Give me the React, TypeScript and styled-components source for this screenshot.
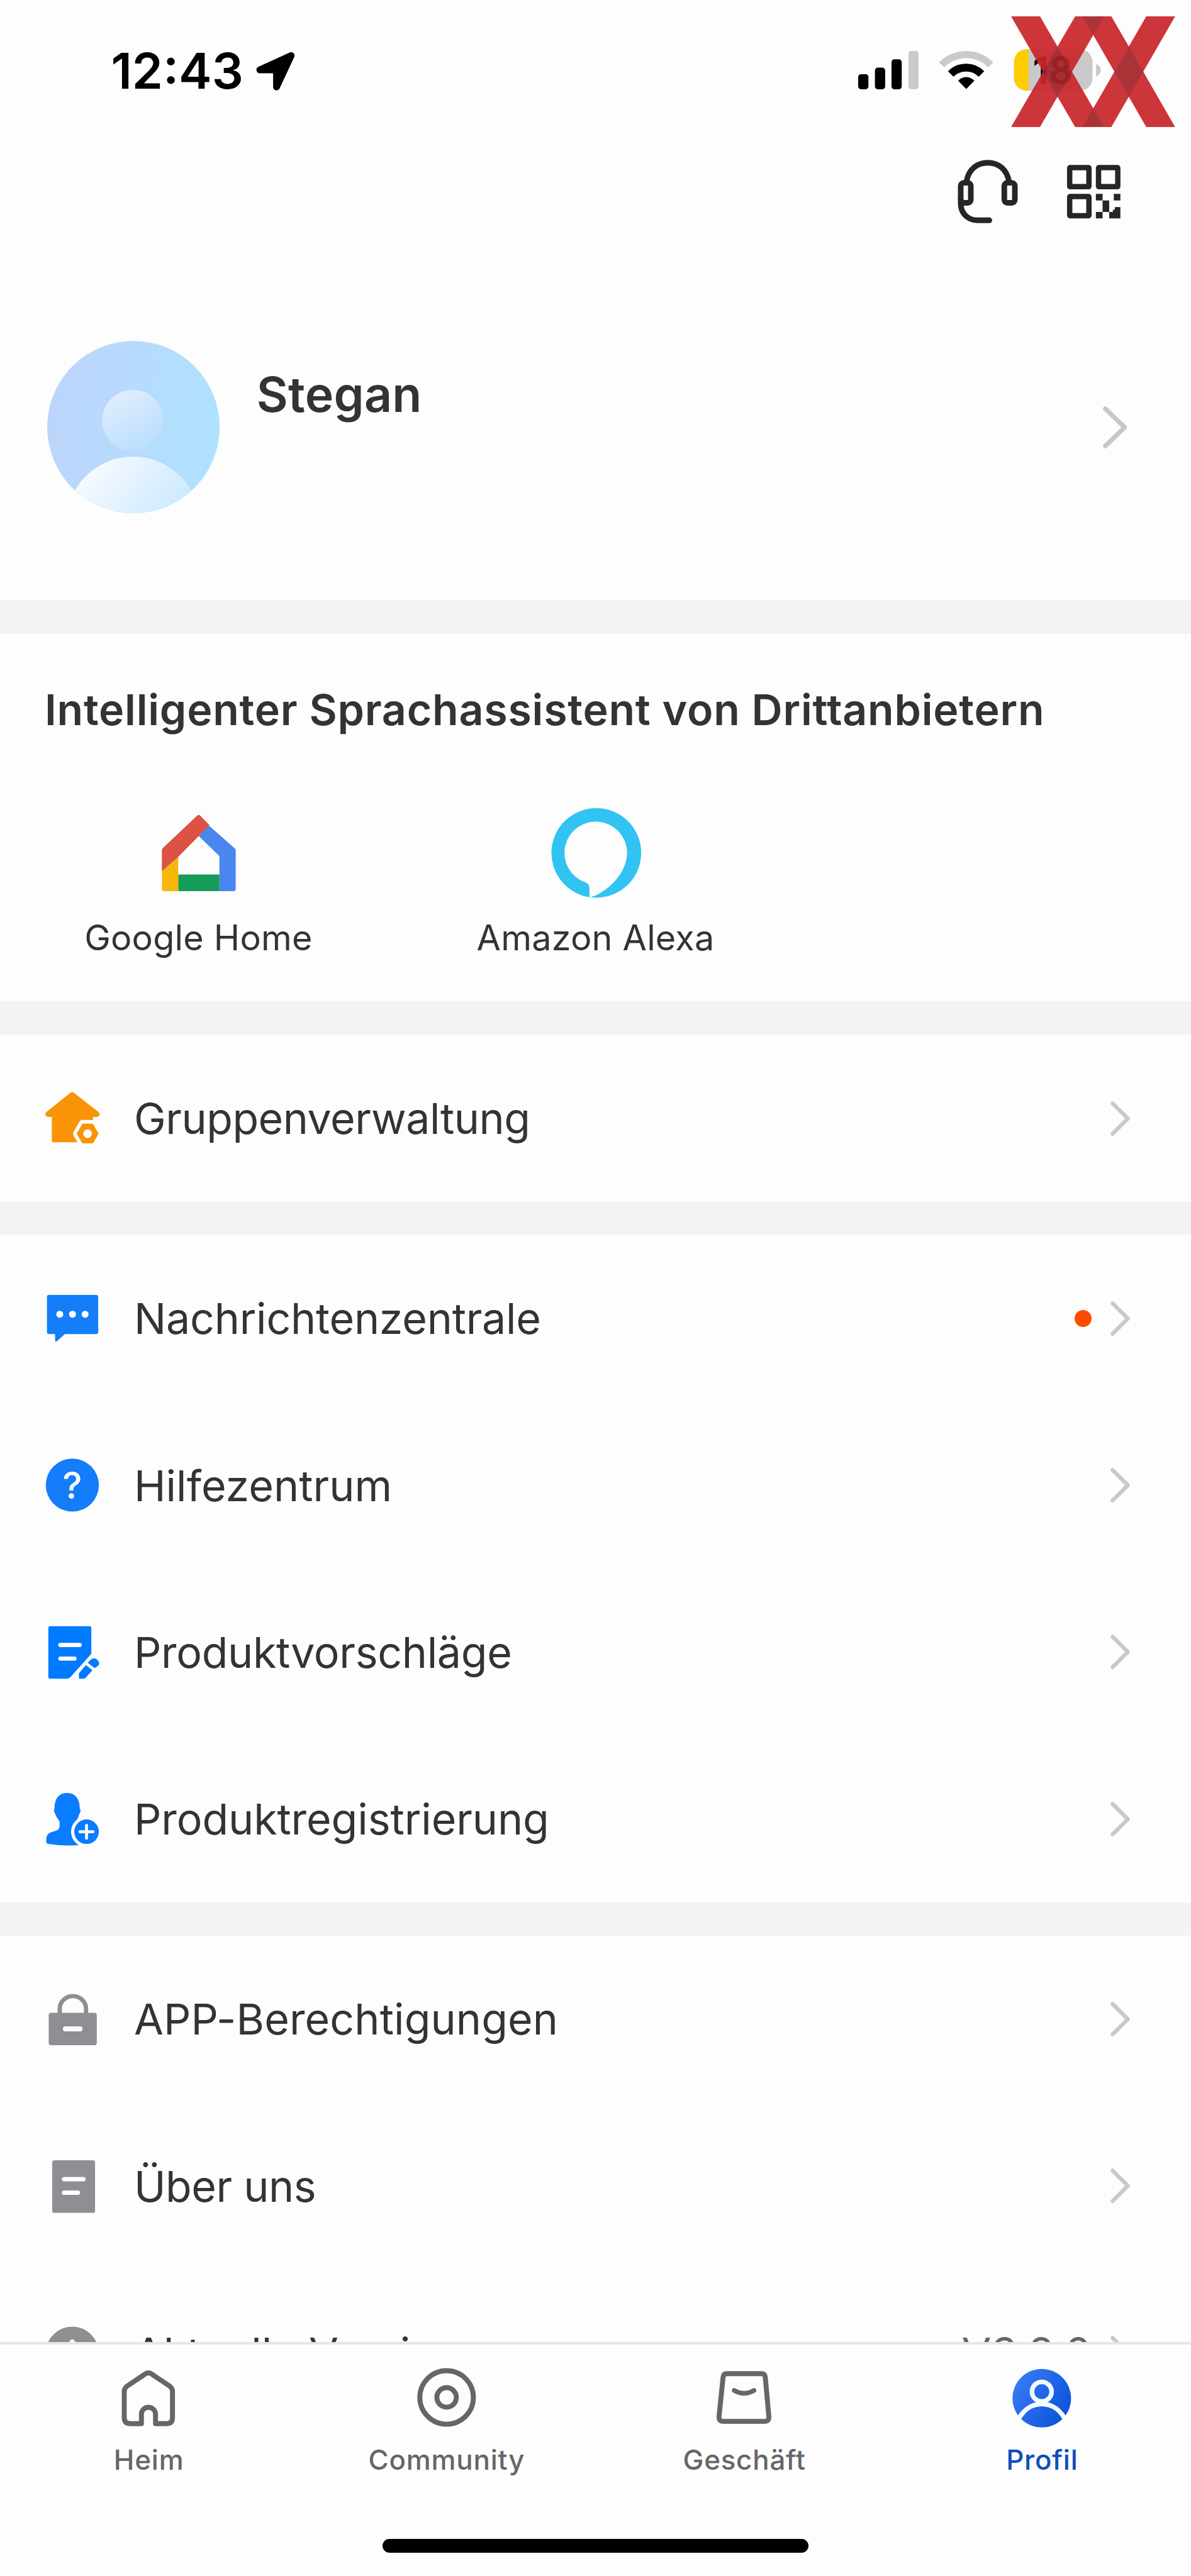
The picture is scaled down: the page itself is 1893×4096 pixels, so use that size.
import React from "react";
import styled, { createGlobalStyle } from "styled-components";

const BG = "#fdfdfd";

/* 1rem equals 100 design units */
const GlobalStyle = createGlobalStyle`
  html { font-size: 98.6px; }
  body {
    margin: 0;
    background: ${BG};
    font-family: Inter, "Liberation Sans", sans-serif;
    color: #333;
  }
  * { box-sizing: border-box; }
  svg { display: block; flex: none; overflow: visible; }
`;

const Screen = styled.div`
  position: relative;
  width: 100%;
  height: 100vh;
  display: flex;
  flex-direction: column;
  overflow: hidden;
  background: ${BG};
`;

const Scroll = styled.main`
  flex: 1;
  min-height: 0;
  overflow: hidden;
`;

const StatusBar = styled.header`
  height: 2.3rem;
  padding: 0 1.42rem 0 1.79rem;
  display: flex;
  align-items: center;
  color: #000;
`;

const Time = styled.span`
  width: 2.34rem;
  font-size: 0.8rem;
  font-weight: 600;
  line-height: 1;
  letter-spacing: 0;
  white-space: nowrap;
`;

const Spacer = styled.div`
  flex: 1;
`;

const Actions = styled.div`
  height: 1.58rem;
  padding-right: 1.11rem;
  display: flex;
  align-items: center;
  justify-content: flex-end;
  gap: 0.72rem;
`;

const Profile = styled.section`
  height: 5.8rem;
  padding: 0.22rem 1.03rem 0 0.765rem;
  display: flex;
  align-items: center;
`;

const NameColumn = styled.div`
  flex: 1;
  height: 2.78rem;
  padding: 0.39rem 0 0 0.59rem;
`;

const Name = styled.h1`
  margin: 0;
  font-size: 0.78rem;
  font-weight: 600;
  line-height: 0.96rem;
  letter-spacing: 0.004em;
`;

const Divider = styled.div`
  height: 0.54rem;
  background: #f3f3f3;
`;

const Assistants = styled.section`
  height: 5.93rem;
  padding-top: 0.72rem;
`;

const AssistantTitle = styled.h2`
  margin: 0;
  padding-left: 0.72rem;
  font-size: 0.69rem;
  font-weight: 600;
  line-height: 1rem;
  letter-spacing: 0.0115em;
  white-space: nowrap;
`;

const AssistantGrid = styled.div`
  display: grid;
  grid-template-columns: repeat(3, 1fr);
  padding-top: 1.09rem;
`;

const Assistant = styled.div`
  display: flex;
  flex-direction: column;
  align-items: center;
  gap: 0.3rem;
`;

const AssistantLabel = styled.span`
  font-size: 0.565rem;
  line-height: 0.7rem;
  letter-spacing: 0.004em;
  white-space: nowrap;
`;

const Row = styled.div`
  height: 2.69rem;
  padding: 0 0.96rem 0 0.72rem;
  display: flex;
  align-items: center;
`;

const RowLabel = styled.span<{ $spacing?: number }>`
  flex: 1;
  padding-left: 0.56rem;
  font-size: 0.69rem;
  line-height: 1rem;
  letter-spacing: ${(p) => p.$spacing ?? 0}em;
  white-space: nowrap;
`;

const Dot = styled.span`
  width: 0.274rem;
  height: 0.274rem;
  margin-right: 0.3rem;
  border-radius: 50%;
  background: #ff4a00;
`;

const Version = styled.span`
  margin-right: 0.3rem;
  font-size: 0.69rem;
  line-height: 1rem;
  color: #666;
`;

const TabBar = styled.nav`
  flex: none;
  height: 3.77rem;
  border-top: 0.05rem solid #e6e6e8;
  background: ${BG};
`;

const Tabs = styled.div`
  display: grid;
  grid-template-columns: repeat(4, 1fr);
  padding-top: 0.38rem;
`;

const Tab = styled.div<{ $active?: boolean }>`
  display: flex;
  flex-direction: column;
  align-items: center;
  gap: 0.215rem;
  font-size: 0.445rem;
  font-weight: 500;
  line-height: 0.6rem;
  letter-spacing: 0.018em;
  color: ${(p) => (p.$active ? "#0b4fb8" : "#666")};
`;

const HomeIndicator = styled.div`
  width: 6.86rem;
  height: 0.224rem;
  margin: 0.98rem auto 0;
  border-radius: 0.112rem;
  background: #000;
`;

const Watermark = styled.div`
  position: absolute;
  top: 0.263rem;
  right: 0.26rem;
`;

const Svg = ({ box, children }: { box: [number, number, number, number]; children: React.ReactNode }) => (
  <svg
    viewBox={box.join(" ")}
    style={{ width: `${box[2] / 100}rem`, height: `${box[3] / 100}rem` }}
    fill="none"
  >
    {children}
  </svg>
);

const Chevron = ({ large }: { large?: boolean }) =>
  large ? (
    <Svg box={[0, 0, 40, 68]}>
      <path d="M5 4 L36 34 L5 64" stroke="#c8c8c8" strokeWidth="7.5" strokeLinecap="round" strokeLinejoin="round" />
    </Svg>
  ) : (
    <Svg box={[0, 0, 34, 56]}>
      <path d="M3.5 3.5 L28 28 L3.5 52.5" stroke="#c9c9c9" strokeWidth="6.5" strokeLinecap="round" strokeLinejoin="round" />
    </Svg>
  );

const LocationArrow = () => (
  <Svg box={[413, 84, 62, 62]}>
    <path d="M419 112.5 L469.5 89.5 L446 140 V112.5 Z" fill="#000" stroke="#000" strokeWidth="11" strokeLinejoin="round" />
  </Svg>
);

const StatusIcons = () => (
  <Svg box={[1383, 79, 395, 72]}>
    <g fill="#000">
      <rect x="1383" y="119.5" width="16.5" height="24.3" rx="4.5" />
      <rect x="1410" y="109" width="16.5" height="34.8" rx="4.5" />
      <rect x="1436.7" y="95.6" width="16.5" height="48.2" rx="4.5" />
      <rect x="1464" y="82" width="16.3" height="61.8" rx="4.5" fill="#cacaca" />
    </g>
    <path d="M1517.4 104.4 A56 56 0 0 1 1596.6 104.4" stroke="#cacaca" strokeWidth="11.5" />
    <path d="M1532.2 119.2 A35 35 0 0 1 1581.8 119.2" stroke="#000" strokeWidth="12.5" />
    <path d="M1557.2 143.5 L1544 130 Q1557.2 118.5 1570.4 130 Z" fill="#000" />
    <clipPath id="cell">
      <rect x="1634" y="79.3" width="127" height="67" rx="21" />
    </clipPath>
    <g clipPath="url(#cell)">
      <rect x="1634" y="79" width="127" height="68" fill="#c9c9c9" />
      <rect x="1634" y="79" width="23.5" height="68" fill="#ffcc00" />
    </g>
    <path d="M1766.5 103 Q1774 106 1774 113 Q1774 120 1766.5 123 Z" fill="#c9c9c9" />
    <text x="1697" y="134.3" fontSize="60" fontWeight="700" fill="#000" textAnchor="middle">18</text>
  </Svg>
);

const Headset = () => (
  <Svg box={[1540, 255, 105, 108]}>
    <g stroke="#262626" strokeWidth="9">
      <rect x="1549.1" y="295.2" width="16.3" height="32.3" rx="5" />
      <rect x="1619.4" y="295.2" width="17" height="32.3" rx="5" />
      <path d="M1558.4 293 C1562 273 1576 262.8 1592.7 262.8 C1609.4 262.8 1623.4 273 1627 293" />
      <path d="M1549.1 322 V328 C1549.1 344 1560 355.7 1576 355.7 H1595.3" strokeLinecap="round" />
    </g>
  </Svg>
);

const QrCode = () => (
  <Svg box={[1717, 263, 92, 92]}>
    <g stroke="#262626" strokeWidth="8.6" strokeLinejoin="round">
      <rect x="1724.3" y="270.6" width="31" height="30.8" rx="0.5" />
      <rect x="1770.8" y="270.6" width="31" height="30.8" rx="0.5" />
      <rect x="1724.3" y="317.3" width="31" height="30.8" rx="0.5" />
    </g>
    <g fill="#262626">
      <path d="M1766.5 313 h10.8 v10.7 h-10.8 z M1795.4 313 h10.6 v10.7 h-10.6 z M1777.3 323.7 h10.7 v18.3 h-10.7 z M1766.5 342 h10.8 v10.4 h-10.8 z" />
      <path d="M1797 334.3 h9 v18.1 h-18 v-10.4 h6 v-3.5 h3 z" />
    </g>
  </Svg>
);

const XxLogo = () => (
  <Svg box={[1629.6, 26.3, 264.5, 178.4]}>
    <g opacity="0.93">
      <path
        d="M1629.6 26.3 H1676.3 L1704.5 75.1 L1732.9 26.3 H1791.3 L1819.4 75.1 L1847.5 26.3 H1894.1 L1842.7 115.5 L1894.1 204.7 H1847.5 L1819.4 155.9 L1791.3 204.7 H1732.9 L1704.5 155.9 L1676.3 204.7 H1629.6 L1681.2 115.5 Z M1762.1 56.4 L1727.9 115.5 L1762.1 174.6 L1796.2 115.5 Z"
        fill="#c9272c"
        fillRule="evenodd"
      />
      <path
        d="M1704.5 75.1 L1727.9 115.5 L1704.5 155.9 L1681.2 115.5 Z M1819.4 75.1 L1842.7 115.5 L1819.4 155.9 L1796.2 115.5 Z M1744.7 26.3 H1779.5 L1762.1 56.4 Z M1744.7 204.7 H1779.5 L1762.1 174.6 Z"
        fill="#a4242a"
      />
    </g>
  </Svg>
);

const Avatar = () => (
  <Svg box={[76.5, 550, 278, 278]}>
    <defs>
      <linearGradient id="sky" x1="0" x2="1" y1="0.4" y2="0.55">
        <stop offset="0" stopColor="#bdd4fb" />
        <stop offset="1" stopColor="#afe2ff" />
      </linearGradient>
      <linearGradient id="head" x1="0.2" x2="0.8" y1="0" y2="1">
        <stop offset="0" stopColor="#e2effd" />
        <stop offset="1" stopColor="#b7dcfe" />
      </linearGradient>
      <linearGradient id="torso" x1="0.2" x2="0.8" y1="0.1" y2="0.6">
        <stop offset="0" stopColor="#f5f9ff" />
        <stop offset="1" stopColor="#c6e7ff" />
      </linearGradient>
      <clipPath id="disc">
        <circle cx="215.5" cy="689" r="139" />
      </clipPath>
    </defs>
    <circle cx="215.5" cy="689" r="139" fill="url(#sky)" />
    <circle cx="214.7" cy="678.5" r="49.5" fill="url(#head)" />
    <g clipPath="url(#disc)">
      <circle cx="215" cy="844.7" r="108" fill="url(#torso)" />
    </g>
  </Svg>
);

const GoogleHome = () => (
  <Svg box={[248, 1303, 144, 144]}>
    <path d="M336 1331 L319.8 1347.9 L353.2 1380.4 V1436.8 H376 Q379.5 1436.8 379.5 1433.3 V1371 Q379.5 1369 378 1368 Z" fill="#4a86f0" />
    <path d="M286.8 1410 H353.2 V1436.8 H286.8 Z" fill="#169c58" />
    <path d="M260.5 1403 L286.8 1378 V1436.8 H264 Q260.5 1436.8 260.5 1433.3 Z" fill="#f4b70a" />
    <path d="M317.5 1315 Q319.8 1313 322.1 1315 L337.2 1330.5 L286.8 1381.5 L260.5 1404.5 V1371 Q260.5 1369 262 1367.5 Z" fill="#dc5245" />
  </Svg>
);

const Alexa = () => (
  <Svg box={[888, 1303.3, 144, 144]}>
    <path
      d="M960 1303.3 A72.2 72.2 0 1 1 951 1447 C975 1441 1010 1411 1010.5 1375.3 A50.5 50.5 0 1 0 943 1423 Q949.5 1425 949.7 1432 L950 1446.9 A72.2 72.2 0 0 1 960 1303.3 Z"
      fill="#31c4f3"
    />
  </Svg>
);

const GroupIcon = () => (
  <Svg box={[72, 1759.5, 88, 88]}>
    <path
      d="M113.5 1762 Q116.3 1759.8 119.1 1762 L158.5 1793 Q161.5 1796 160.3 1798.5 L157.5 1801.2 H150 V1842 H86.5 Q83.6 1842 83.6 1839 V1801.2 H76.5 L73.2 1798 Q72 1795.5 75 1793 Z"
      fill="#f99406"
    />
    <path d="M133 1812 H149.5 L158.8 1828 L149.5 1843.8 H133 L123.8 1828 Z" fill="#f99406" stroke={BG} strokeWidth="12" strokeLinejoin="round" />
    <path d="M134 1814 H148.5 L156.8 1828 L148.5 1841.8 H134 L125.8 1828 Z" fill="#f99406" stroke="#f99406" strokeWidth="4" strokeLinejoin="round" />
    <circle cx="141.2" cy="1828" r="7" fill={BG} />
  </Svg>
);

const MessageIcon = () => (
  <Svg box={[72, 2082.5, 88, 88]}>
    <path
      d="M79 2088.7 H155 Q158.3 2088.7 158.3 2092 V2148.4 Q158.3 2151.7 155 2151.7 H104.5 L91.5 2163.5 Q88.8 2165 88.8 2161.5 V2151.7 H79 Q75.7 2151.7 75.7 2148.4 V2092 Q75.7 2088.7 79 2088.7 Z"
      fill="#137dfa"
    />
    <g fill={BG}>
      <circle cx="96.3" cy="2119.8" r="5.6" />
      <circle cx="116.9" cy="2119.8" r="5.6" />
      <circle cx="137.2" cy="2119.8" r="5.6" />
    </g>
  </Svg>
);

const HelpIcon = () => (
  <Svg box={[72, 2351.5, 88, 88]}>
    <circle cx="116.6" cy="2395.5" r="42.8" fill="#137dfa" />
    <text x="116.4" y="2417.8" fontSize="60" fontWeight="500" fill={BG} textAnchor="middle">?</text>
  </Svg>
);

const SuggestionIcon = () => (
  <Svg box={[72, 2620.5, 88, 88]}>
    <path d="M81 2622.3 H144 Q147.2 2622.3 147.2 2625.5 V2667 L114 2704 Q111.5 2707 108.5 2707 H81 Q77.9 2707 77.9 2704 V2625.5 Q77.9 2622.3 81 2622.3 Z" fill="#007aff" />
    <path d="M97.3 2652.5 H128.5 M97.3 2674.5 H120" stroke={BG} strokeWidth="6.8" strokeLinecap="round" />
    <path d="M127.3 2707 V2698 L138.5 2684.8 L149 2693.3 L138 2705.5 Q136.5 2707 134.5 2707 Z" fill="#007aff" />
    <path d="M141.5 2681.3 L146.5 2676 Q151 2672 156.5 2676 Q162 2681.5 158.5 2686 L152.5 2690 Z" fill="#007aff" />
  </Svg>
);

const RegisterIcon = () => (
  <Svg box={[72, 2889.5, 88, 88]}>
    <path
      d="M108 2891.5 C122 2891.5 128.5 2902 128.5 2916 C131 2920 129 2924 127.5 2926 C126 2933 122 2938 120.5 2941 V2949 C122 2955 135 2957 140 2962 V2974.5 Q108 2978.5 76.5 2973.5 Q74.3 2972.5 74.5 2969 C74.5 2954 82 2956 90 2952.5 Q96 2950.5 96 2945 V2937 C92.5 2932 90.5 2930 89.5 2926 Q85.5 2920 88 2915.5 C88 2902 94 2891.5 108 2891.5 Z"
      fill="#0a7cff"
    />
    <circle cx="139.5" cy="2954" r="25" fill={BG} />
    <circle cx="139.5" cy="2954" r="19.8" fill="#0a7cff" />
    <path d="M139.5 2943.5 V2964.5 M129 2954 H150" stroke={BG} strokeWidth="4.8" strokeLinecap="round" />
  </Svg>
);

const LockIcon = () => (
  <Svg box={[72, 3212.5, 88, 88]}>
    <rect x="78.5" y="3246.4" width="77.5" height="52.4" rx="4" fill="#8e8f93" />
    <path d="M96.3 3248 V3240 A21.2 20.5 0 0 1 138.7 3240 V3248" stroke="#8e8f93" strokeWidth="7" />
    <rect x="101.4" y="3268.3" width="31.6" height="8" rx="4" fill={BG} />
  </Svg>
);

const AboutIcon = () => (
  <Svg box={[72, 3481.5, 88, 88]}>
    <rect x="84.2" y="3483.5" width="69" height="84.8" rx="3.5" fill="#8e8f93" />
    <rect x="99.7" y="3510.3" width="38.3" height="7.2" rx="3.6" fill={BG} />
    <rect x="99.7" y="3532.1" width="29.3" height="7.2" rx="3.6" fill={BG} />
  </Svg>
);

const UpdateIcon = () => (
  <Svg box={[72, 3750.5, 88, 88]}>
    <circle cx="116.5" cy="3794.5" r="42.6" fill="#8e8f93" />
    <path d="M116.5 3818 V3776 M102 3790 L116.5 3775.5 L131 3790" stroke={BG} strokeWidth="6" strokeLinecap="round" strokeLinejoin="round" />
  </Svg>
);

const HomeIcon = () => (
  <Svg box={[192, 3820, 96, 96]}>
    <path
      d="M228.3 3909 H210 Q200.6 3909 200.6 3899.5 V3857 Q200.6 3852.5 204.5 3849 L235 3828.5 Q239.5 3825.5 244 3828.5 L274.5 3849 Q278.4 3852.5 278.4 3857 V3899.5 Q278.4 3909 269 3909 H251 V3893 A11.4 11.4 0 0 0 228.3 3893 Z"
      stroke="#666"
      strokeWidth="8"
      strokeLinejoin="round"
    />
  </Svg>
);

const CommunityIcon = () => (
  <Svg box={[672, 3820, 96, 96]}>
    <circle cx="719.5" cy="3866.7" r="43.2" stroke="#666" strokeWidth="8" />
    <circle cx="719.5" cy="3866.7" r="15.7" stroke="#666" strokeWidth="8" />
  </Svg>
);

const ShopIcon = () => (
  <Svg box={[1152, 3820, 96, 96]}>
    <path
      d="M1172 3828.4 H1227 Q1233 3828.4 1233.5 3834 L1239.3 3898 Q1239.5 3905.3 1232.5 3905.3 H1165.7 Q1158.7 3905.3 1158.9 3898 L1165.5 3834 Q1166 3828.4 1172 3828.4 Z"
      stroke="#666"
      strokeWidth="8"
    />
    <path d="M1183.5 3855.5 Q1199.3 3864.5 1215.2 3855.5" stroke="#666" strokeWidth="7.6" strokeLinecap="round" />
  </Svg>
);

const ProfileIcon = () => (
  <Svg box={[1632, 3820, 96, 96]}>
    <defs>
      <linearGradient id="badge" x1="0" x2="1" y1="0.1" y2="0.7">
        <stop offset="0" stopColor="#3c7df6" />
        <stop offset="1" stopColor="#0c53db" />
      </linearGradient>
      <clipPath id="badgeClip">
        <circle cx="1679.5" cy="3868" r="48" />
      </clipPath>
    </defs>
    <circle cx="1679.5" cy="3868" r="47.2" fill="url(#badge)" />
    <g clipPath="url(#badgeClip)" stroke="#f4fbff" strokeWidth="7.5">
      <circle cx="1679.5" cy="3857.5" r="15.8" />
      <path d="M1640 3906 C1648 3888 1662 3877.3 1679.5 3877.3 C1697 3877.3 1711 3888 1719 3906" />
    </g>
  </Svg>
);

type Entry = {
  label: string;
  icon: React.ReactNode;
  dot?: boolean;
  version?: string;
  spacing?: number;
};

const groups: Entry[][] = [
  [{ label: "Gruppenverwaltung", icon: <GroupIcon />, spacing: -0.0065 }],
  [
    { label: "Nachrichtenzentrale", icon: <MessageIcon />, dot: true, spacing: -0.003 },
    { label: "Hilfezentrum", icon: <HelpIcon />, spacing: 0.001 },
    { label: "Produktvorschläge", icon: <SuggestionIcon />, spacing: -0.0045 },
    { label: "Produktregistrierung", icon: <RegisterIcon />, spacing: -0.001 },
  ],
  [
    { label: "APP-Berechtigungen", icon: <LockIcon />, spacing: 0.002 },
    { label: "Über uns", icon: <AboutIcon />, spacing: -0.007 },
    { label: "Aktuelle Version", icon: <UpdateIcon />, version: "V3.8.0" },
  ],
];

const tabs = [
  { label: "Heim", icon: <HomeIcon /> },
  { label: "Community", icon: <CommunityIcon /> },
  { label: "Geschäft", icon: <ShopIcon /> },
  { label: "Profil", icon: <ProfileIcon />, active: true },
];

export default function App() {
  return (
    <>
      <GlobalStyle />
      <Screen>
        <Scroll>
          <StatusBar>
            <Time>12:43</Time>
            <LocationArrow />
            <Spacer />
            <StatusIcons />
          </StatusBar>
          <Actions>
            <Headset />
            <QrCode />
          </Actions>
          <Profile>
            <Avatar />
            <NameColumn>
              <Name>Stegan</Name>
            </NameColumn>
            <Chevron large />
          </Profile>
          <Divider />
          <Assistants>
            <AssistantTitle>Intelligenter Sprachassistent von Drittanbietern</AssistantTitle>
            <AssistantGrid>
              <Assistant>
                <GoogleHome />
                <AssistantLabel>Google Home</AssistantLabel>
              </Assistant>
              <Assistant>
                <Alexa />
                <AssistantLabel>Amazon Alexa</AssistantLabel>
              </Assistant>
            </AssistantGrid>
          </Assistants>
          {groups.map((entries, i) => (
            <React.Fragment key={i}>
              <Divider />
              {entries.map((e) => (
                <Row key={e.label}>
                  {e.icon}
                  <RowLabel $spacing={e.spacing}>{e.label}</RowLabel>
                  {e.dot && <Dot />}
                  {e.version && <Version>{e.version}</Version>}
                  <Chevron />
                </Row>
              ))}
            </React.Fragment>
          ))}
        </Scroll>
        <TabBar>
          <Tabs>
            {tabs.map((t) => (
              <Tab key={t.label} $active={t.active}>
                {t.icon}
                {t.label}
              </Tab>
            ))}
          </Tabs>
          <HomeIndicator />
        </TabBar>
        <Watermark>
          <XxLogo />
        </Watermark>
      </Screen>
    </>
  );
}
